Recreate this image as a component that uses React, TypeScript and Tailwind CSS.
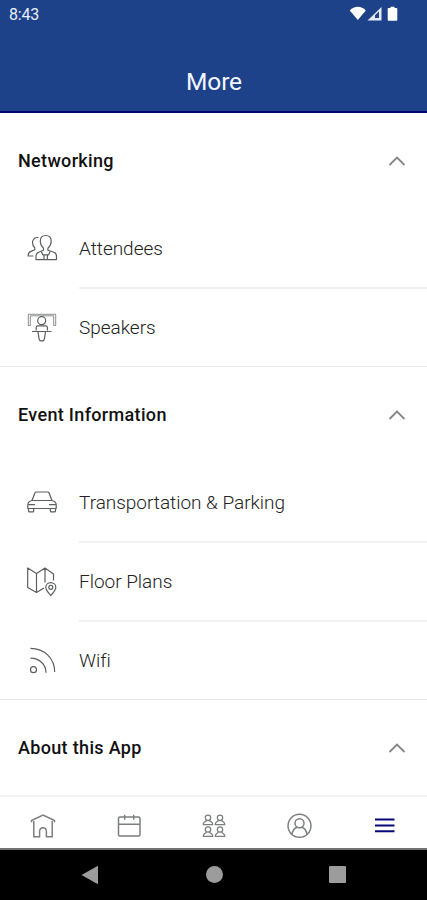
import React from 'react';

type Item = { label: string; icon: React.JSX.Element };
type Group = { title: string; items: Item[] };

function Icon({ children }: { children: React.ReactNode }): React.JSX.Element {
  return (
    <svg
      width="32"
      height="31"
      viewBox="0 0 32 31"
      fill="none"
      stroke="currentColor"
      strokeWidth="1.2"
      strokeLinejoin="round"
      className="shrink-0 text-[#5c5f5e]"
    >
      {children}
    </svg>
  );
}

const attendees = (
  <Icon>
    <path d="M17.5 15.2C15.6 13.4 14.3 11 14.3 8.200c0-3.600 2.200-5.700 5.400-5.700s5.500 2.100 5.500 5.700c0 2.800-1.300 5.200-3.300 7v2.100l6 1.900c1.800.6 2.600 2 2.600 4.400v3H10v-3c0-2.400.8-3.800 2.600-4.400l4.900-1.900z" />
    <path d="M15.300 18.500l1.500 3.300h5.800l1.500-3.300M18 21.800v4.800M21.400 21.800v4.800" />
    <path d="M12.500 4.700C9.500 3.900 6.500 5.800 6.500 9.500c0 2.300.9 4.200 2.300 5.500v1.800l-4 1.600c-2 .8-2.700 2.200-2.700 4.600h5.400" />
  </Icon>
);

const speakers = (
  <Icon>
    <path d="M2.300 13.500V2.300h27.400v11.200h-2V3.800H4.300v9.700z" strokeWidth="0.7" />
    <circle cx="15.700" cy="8.700" r="4" />
    <path d="M10.200 18.500v-3c0-1 .7-1.600 1.700-1.600h7.800c1 0 1.700.6 1.700 1.600v3M6 19.500h19.500M12 19.500l1 7.200c.2 1.500 1 2.200 2 2.200h1.500c1 0 1.800-.7 2-2.200l1-7.200" />
  </Icon>
);

const car = (
  <Icon>
    <path d="M6 13.500l3-7.700c.3-.6.700-.8 1.300-.8h11.400c.6 0 1 .2 1.300.8l3 7.700zM6 13.500c-2.800.7-4.200 2-4.200 4.500v3.500h28.400V18c0-2.500-1.400-3.800-4.200-4.500M2.500 21.500V24c0 .6.400.9 1 .9h3.200c.6 0 1-.3 1-.9v-2.500M24.300 21.500V24c0 .6.400.9 1 .9h3.200c.6 0 1-.3 1-.9v-2.500M2.500 17.700H9M23 17.700h6.500" />
  </Icon>
);

const floorPlan = (
  <Icon>
    <path d="M1.700 2v19.500L10.500 26.500V7.500zM10.500 7.500L19 2l8.500 6v6.500M10.500 26.500l7.500-4.500M19 2v14.500" />
    <path d="M24.800 29.500c-2.800-3.300-5-5.400-5-8 0-2.800 2.200-4.800 5-4.800s5 2 5 4.800c0 2.600-2.200 4.700-5 8z" />
    <circle cx="24.800" cy="21.300" r="2" />
  </Icon>
);

const wifi = (
  <Icon>
    <circle cx="7.500" cy="24.700" r="3" />
    <path d="M4.500 13.200c8.500 0 15.500 6 15.500 14.500M4.500 3.300C18.500 3.300 28.700 13.500 28.700 27" />
  </Icon>
);

const groups: Group[] = [
  {
    title: 'Networking',
    items: [
      { label: 'Attendees', icon: attendees },
      { label: 'Speakers', icon: speakers },
    ],
  },
  {
    title: 'Event Information',
    items: [
      { label: 'Transportation & Parking', icon: car },
      { label: 'Floor Plans', icon: floorPlan },
      { label: 'Wifi', icon: wifi },
    ],
  },
  { title: 'About this App', items: [] },
];

function StatusBar(): React.JSX.Element {
  return (
    <div className="flex h-7 items-center justify-between pl-[9px] pr-7">
      <span className="pt-px text-[16px] tracking-[-0.2px] text-[#e9eefb]">8:43</span>
      <svg width="50" height="16" viewBox="0 0 50 16" fill="white">
        <path d="M.8 4.500C5.200-.5 12.400-.5 16.800 4.500L8.800 14z" />
        <path d="M18.500 14.500L32.500 1v13.500z" fill="#e4e9f6" />
        <path d="M26 12V9.200l4-3.700V12z" fill="#1d4289" />
        <path d="M41.500 2V.8h4V2h1.800c.6 0 1 .4 1 1v10.800c0 .6-.4 1-1 1h-7.600c-.6 0-1-.4-1-1V3c0-.6.4-1 1-1z" />
      </svg>
    </div>
  );
}

function Section({ group }: { group: Group }): React.JSX.Element {
  return (
    <section className="shadow-[inset_0_-1px_0_#e8e8e8] last:shadow-none">
      <div className="flex h-24 items-center justify-between pl-[18px] pr-[21px]">
        <h2 className="pb-0.5 text-[18px] font-medium tracking-[0.33px] text-[#111111]">{group.title}</h2>
        <svg width="18" height="12" viewBox="0 0 18 12" fill="none" stroke="#858585" strokeWidth="1.8">
          <path d="M1.500 10L9 2.500l7.500 7.500" />
        </svg>
      </div>
      {group.items.map((item) => (
        <div key={item.label} className="group flex h-[79px] items-center pl-[26px]">
          {item.icon}
          <div className="ml-[21px] flex h-20 flex-1 items-center self-start border-b-2 border-[#f2f2f2] pt-[2px] group-last:border-transparent">
            <span className="text-[19px] font-light tracking-[-0.02px] text-[#222222]">{item.label}</span>
          </div>
        </div>
      ))}
    </section>
  );
}

function Person({ x, y }: { x: number; y: number }): React.JSX.Element {
  return (
    <g transform={`translate(${x} ${y})`}>
      <circle cx="5" cy="3" r="2.700" />
      <path d="M3.300 5.200l-.3 1L1.200 7.500C.6 8 .3 8.700.3 9.900h9.400c0-1.200-.3-1.900-.9-2.400L7 6.200l-.3-1" />
    </g>
  );
}

function TabBar(): React.JSX.Element {
  const icon = 'h-[26px] w-[26px] text-[#7c7f7e]';
  const base = { viewBox: '0 0 26 26', fill: 'none', stroke: 'currentColor', strokeWidth: 1.5 };
  return (
    <nav className="grid h-[55px] shrink-0 grid-cols-5 place-items-center border-b-2 border-t-2 border-b-[#737373] border-t-[#f4f4f4] bg-white pt-[7px]">
      <svg {...base} className={icon}>
        <path d="M1.500 9.200V7.500L13 2l11.500 5.500v1.700M3.800 8v15.700h5.800v-5.200c0-2.500 1.200-3.800 3.400-3.800s3.400 1.300 3.400 3.800v5.200h5.800V8" />
      </svg>
      <svg {...base} className={icon}>
        <rect x="3.500" y="4" width="21.500" height="19" rx="1.500" />
        <path d="M3.500 11.200H25M9.700 1.800v5M18.700 1.800v5" />
      </svg>
      <svg {...base} strokeWidth={1.3} className={icon}>
        <Person x={3} y={1.8} />
        <Person x={15} y={1.8} />
        <Person x={3} y={13.5} />
        <Person x={15} y={13.5} />
      </svg>
      <svg {...base} className={icon}>
        <circle cx="13.500" cy="12.800" r="11.500" />
        <circle cx="13.500" cy="10.300" r="4.500" />
        <path d="M6 21.500c.4-3.600 2.200-6.100 5-7.300M21 21.500c-.4-3.600-2.200-6.100-5-7.300" />
      </svg>
      <svg {...base} strokeWidth={2} className="h-[26px] w-[26px] text-[#07077c]">
        <path d="M4 6.500h19.500M4 12.500h19.500M4 18.200h19.500" />
      </svg>
    </nav>
  );
}

function SystemNav(): React.JSX.Element {
  return (
    <div className="flex h-[50px] shrink-0 items-center justify-between bg-black pb-px pl-[81px] pr-[81px] text-[#9c9c9c]">
      <svg width="18" height="20" viewBox="0 0 18 20" fill="currentColor">
        <path d="M17 .8v18.400L.5 10z" />
      </svg>
      <div className="h-[17px] w-[17px] rounded-full bg-[#9c9c9c]" />
      <div className="h-[17px] w-[17px] rounded-[1px] bg-[#9c9c9c]" />
    </div>
  );
}

export default function App(): React.JSX.Element {
  return (
    <div className="flex h-[900px] w-[427px] flex-col overflow-hidden bg-white font-['Roboto',sans-serif]">
      <header className="h-[113px] shrink-0 border-b-2 border-[#02056f] bg-[#1d4289]">
        <StatusBar />
        <h1 className="flex h-[109px] items-center justify-center pl-px text-[24.5px] leading-none tracking-[-0.1px] text-[#f3f6ff]">
          More
        </h1>
      </header>
      <main className="min-h-0 flex-1 overflow-hidden">
        {groups.map((group) => (
          <Section key={group.title} group={group} />
        ))}
      </main>
      <TabBar />
      <SystemNav />
    </div>
  );
}
